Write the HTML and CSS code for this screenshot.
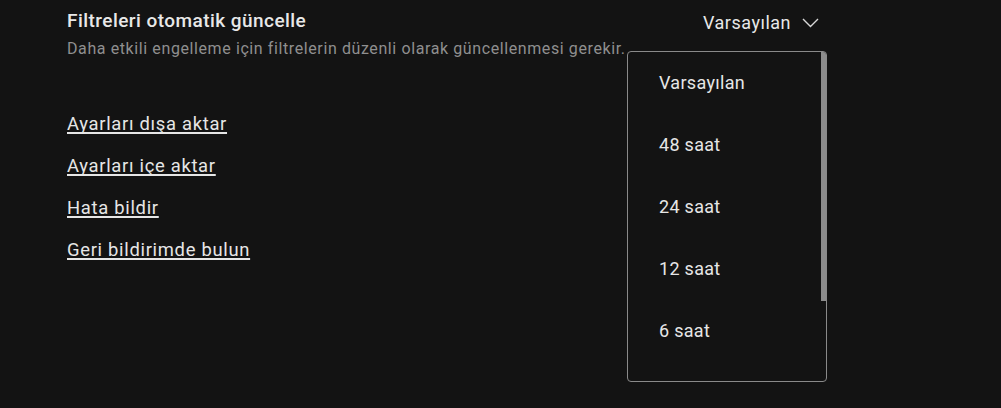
FILE: index.html
```html
<!DOCTYPE html>
<html lang="tr">
<head>
<meta charset="utf-8">
<link rel="stylesheet" href="styles.css">
</head>
<body>
<main class="page">
  <section class="setting">
    <div class="setting-text">
      <div class="setting-title">Filtreleri otomatik güncelle</div>
      <div class="setting-desc">Daha etkili engelleme için filtrelerin düzenli olarak güncellenmesi gerekir.</div>
    </div>
    <div class="select">
      <button class="select-btn">Varsayılan
        <svg class="chev" width="17" height="10" viewBox="0 0 17 10"><path d="M1 1 L8.5 8.5 L16 1" fill="none" stroke="#d8d8d8" stroke-width="1.4"/></svg>
      </button>
      <ul class="menu">
        <li>Varsayılan</li>
        <li>48 saat</li>
        <li>24 saat</li>
        <li>12 saat</li>
        <li>6 saat</li>
      </ul>
    </div>
  </section>
  <nav class="links">
    <a href="#">Ayarları dışa aktar</a>
    <a href="#">Ayarları içe aktar</a>
    <a href="#">Hata bildir</a>
    <a href="#">Geri bildirimde bulun</a>
  </nav>
</main>
</body>
</html>
```
FILE: styles.css
```css
html, body {
  margin: 0;
  padding: 0;
  background: #131313;
  height: 100%;
  overflow: hidden;
}
body {
  font-family: Roboto, "Liberation Sans", sans-serif;
  color: #e6e6e6;
}
.page {
  padding: 8px 0 0 67px;
  width: 760px;
}
.setting {
  display: flex;
  justify-content: space-between;
  align-items: flex-start;
}
.setting-title {
  font-size: 19px;
  font-weight: 500;
  letter-spacing: 0.45px;
  line-height: 25px;
  color: #e8e8e8;
}
.setting-desc {
  font-size: 16px;
  letter-spacing: 0.6px;
  line-height: 22px;
  color: #8f8f8f;
  margin-top: 5px;
}
.select {
  position: relative;
}
.select-btn {
  background: none;
  border: none;
  padding: 0;
  margin: 3px 8px 0 0;
  font-family: inherit;
  font-size: 18px;
  letter-spacing: 0.5px;
  line-height: 24px;
  color: #e8e8e8;
  display: flex;
  align-items: center;
  gap: 11px;
  white-space: nowrap;
}
.chev { display: block; margin-top: -1px; }
.menu {
  position: absolute;
  top: 43px;
  right: 0;
  width: 198px;
  height: 310px;
  margin: 0;
  padding: 19px 0 0 0;
  list-style: none;
  border: 1px solid #8a8a8a;
  border-radius: 4px;
  background: #131313;
  overflow: hidden;
}
.menu::after {
  content: "";
  position: absolute;
  top: -1px;
  right: -1px;
  width: 6px;
  height: 250px;
  background: #8c8c8c;
}
.menu li {
  font-size: 18px;
  letter-spacing: 0.3px;
  line-height: 24px;
  height: 62px;
  padding-left: 31px;
  color: #e6e6e6;
}
.links {
  display: flex;
  flex-direction: column;
  align-items: flex-start;
  gap: 18px;
  margin-top: 52px;
}
.links a {
  font-size: 18.4px;
  letter-spacing: 0.7px;
  line-height: 24px;
  color: #e6e6e6;
  text-decoration: underline;
  text-decoration-thickness: 1.5px;
  text-decoration-skip-ink: none;
  text-underline-offset: 2px;
}
```
